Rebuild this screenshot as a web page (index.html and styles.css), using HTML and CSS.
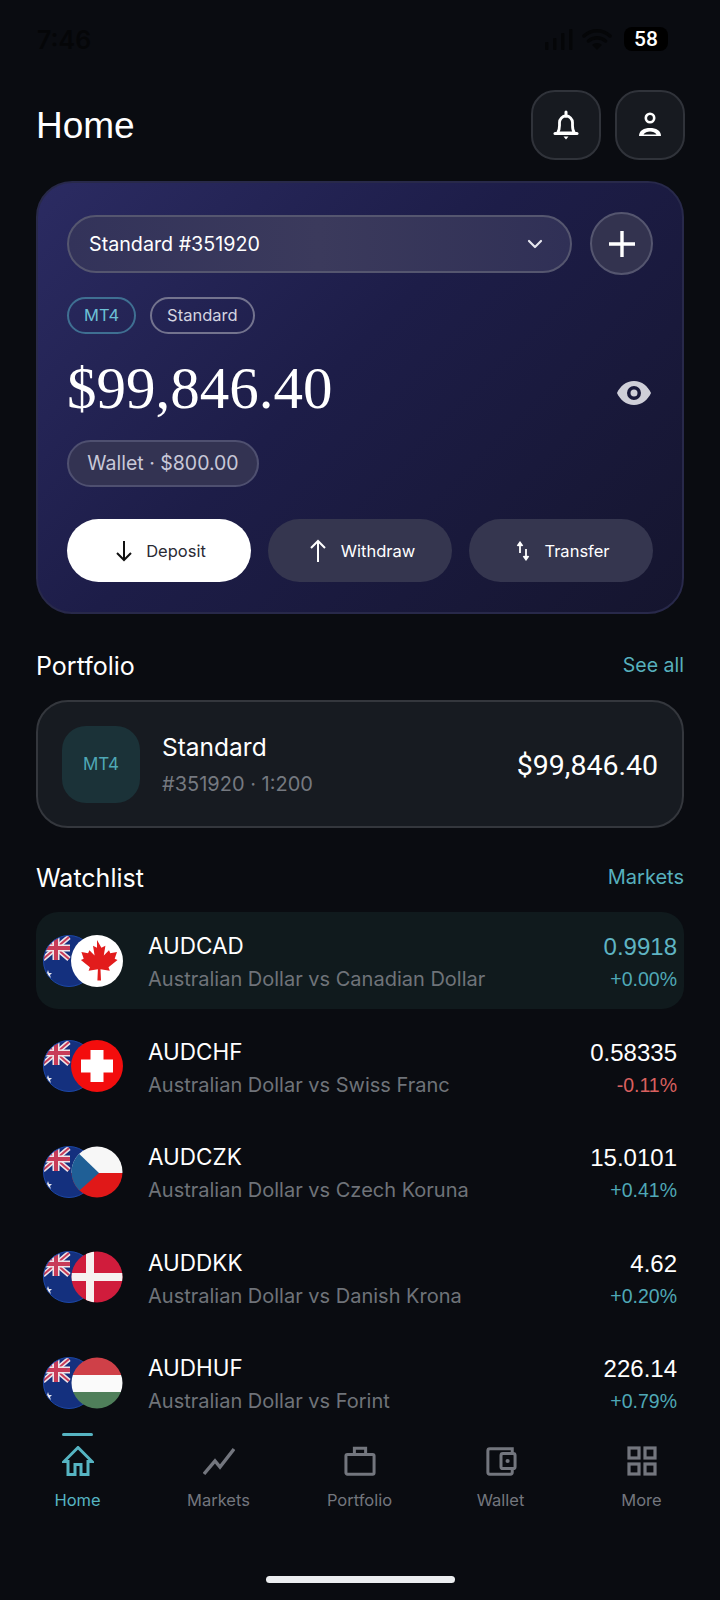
FILE: index.html
```html
<!DOCTYPE html>
<html lang="en">
<head>
<meta charset="utf-8">
<title>Home</title>
<link rel="stylesheet" href="styles.css">
</head>
<body>
<svg class="defs" width="0" height="0" aria-hidden="true">
  <defs>
    <clipPath id="round"><circle cx="26" cy="26" r="25.5"/></clipPath>
    <symbol id="flag-au" viewBox="0 0 52 52">
      <g clip-path="url(#round)">
        <rect width="52" height="52" fill="#14307e"/>
        <path d="M0 2L26 24M26 2L0 24" stroke="#efe4e8" stroke-width="5"/>
        <path d="M0 2L26 24M26 2L0 24" stroke="#c83c58" stroke-width="2"/>
        <path d="M13 0V25M0 13H27" stroke="#efe4e8" stroke-width="7"/>
        <path d="M13 0V25M0 13H27" stroke="#c83c58" stroke-width="4"/>
        <path d="M5 35l1 3 3 0-2 2 1 3-3-2-3 2 1-3-2-2 3 0z" fill="#e8e8f0"/>
      </g>
      <circle cx="26" cy="26" r="25.5" fill="none" stroke="#1c48a8" stroke-width="1"/>
    </symbol>
    <symbol id="flag-ca" viewBox="0 0 52 52">
      <circle cx="26" cy="26" r="26" fill="#fff"/>
      <path d="M26 5l4.400 7.800 4-2.100-1.600 9.900 5.200-5.400 1.300 3 6.700-1.200-2.300 6.800 2.800 1.100-9 7.400 1.300 3.500-9.300-1.500.5 11.200h-3.600l.5-11.200-9.300 1.500 1.300-3.500-9-7.400 2.800-1.100-2.300-6.800 6.700 1.200 1.300-3 5.200 5.400-1.600-9.900 4 2.100z" fill="#e21c1c"/>
    </symbol>
    <symbol id="flag-ch" viewBox="0 0 52 52">
      <circle cx="26" cy="26" r="26" fill="#f30d0d"/>
      <path d="M19.500 10h13v9.500H42v13h-9.500V42h-13v-9.500H10v-13h9.500z" fill="#fff"/>
    </symbol>
    <symbol id="flag-cz" viewBox="0 0 52 52">
      <g clip-path="url(#round)">
        <rect width="52" height="27" fill="#f7f7f7"/>
        <rect y="27" width="52" height="25" fill="#e01818"/>
        <path d="M0 0L28 27 0 52z" fill="#1f5f96"/>
      </g>
    </symbol>
    <symbol id="flag-dk" viewBox="0 0 52 52">
      <g clip-path="url(#round)">
        <rect width="52" height="52" fill="#d01c3c"/>
        <rect x="15" width="8" height="52" fill="#f6f0f0"/>
        <rect y="22" width="52" height="8" fill="#f6f0f0"/>
      </g>
    </symbol>
    <symbol id="flag-hu" viewBox="0 0 52 52">
      <g clip-path="url(#round)">
        <rect width="52" height="18" fill="#cf4048"/>
        <rect y="18" width="52" height="17" fill="#fafafa"/>
        <rect y="35" width="52" height="17" fill="#4f7f5a"/>
      </g>
    </symbol>
  </defs>
</svg>

<div class="status">
  <span class="clock">7:46</span>
  <div class="status-right">
    <svg width="30" height="22" viewBox="0 0 30 22"><g fill="#050608"><rect x="1" y="14" width="3.500" height="8" rx="1"/><rect x="9" y="10" width="3.500" height="12" rx="1"/><rect x="17" y="5" width="3.500" height="17" rx="1"/><rect x="25" y="1" width="3.500" height="21" rx="1"/></g></svg>
    <svg width="30" height="22" viewBox="0 0 30 22"><path d="M2 8a19 19 0 0 1 26 0M6.500 13a13 13 0 0 1 17 0" fill="none" stroke="#050608" stroke-width="3.500" stroke-linecap="round"/><path d="M15 22l-5-5a7 7 0 0 1 10 0z" fill="#050608"/></svg>
    <span class="battery">58</span>
  </div>
</div>

<header class="top">
  <h1 class="title">Home</h1>
  <div class="top-actions">
    <button class="square">
      <svg width="26" height="30" viewBox="0 0 26 30"><path d="M4.500 23c1.600-2 2-4 2-7.500v-3a6.500 6.500 0 0 1 13 0v3c0 3.500.4 5.500 2 7.500z" fill="none" stroke="#fff" stroke-width="2.800" stroke-linejoin="round"/><path d="M13 2v4" stroke="#fff" stroke-width="3" stroke-linecap="round"/><path d="M2 23.500h22" stroke="#fff" stroke-width="3" stroke-linecap="round"/><path d="M10.500 26.500h5L13 29.500z" fill="#fff"/></svg>
    </button>
    <button class="square">
      <svg width="26" height="26" viewBox="0 0 26 26"><circle cx="13" cy="6" r="4.200" fill="none" stroke="#fff" stroke-width="2.600"/><path d="M2 24c0-5.500 5-8 11-8s11 2.500 11 8z" fill="#fff"/><path d="M6.500 22.500c1-2 4-3 6.500-3s5.500 1 6.500 3z" fill="#171a20"/></svg>
    </button>
  </div>
</header>

<main class="scroll">
  <section class="card">
    <div class="account-row">
      <div class="select">
        <span>Standard #351920</span>
        <svg width="16" height="10" viewBox="0 0 16 10"><path d="M2 2l6 6 6-6" fill="none" stroke="#e6e6ee" stroke-width="2.200" stroke-linecap="round" stroke-linejoin="round"/></svg>
      </div>
      <button class="plus">
        <svg width="28" height="28" viewBox="0 0 28 28"><path d="M14 1v26M1 14h26" stroke="#fff" stroke-width="3.400"/></svg>
      </button>
    </div>
    <div class="chips">
      <span class="chip chip-teal">MT4</span>
      <span class="chip chip-plain">Standard</span>
    </div>
    <div class="balance-row">
      <span class="balance">$99,846.40</span>
      <svg class="eye" width="36" height="28" viewBox="0 0 36 28"><path fill-rule="evenodd" d="M18 2c8 0 14 5.500 17 12-3 6.500-9 12-17 12S4 20.500 1 14C4 7.500 10 2 18 2zm0 5a7 7 0 1 0 0 14 7 7 0 0 0 0-14zm0 3.500a3.500 3.500 0 1 1 0 7 3.500 3.500 0 0 1 0-7z" fill="#cfcfd8"/></svg>
    </div>
    <div class="wallet">Wallet · $800.00</div>
    <div class="actions">
      <button class="action action-light">
        <svg width="16" height="22" viewBox="0 0 16 22"><path d="M8 1v19M1 13l7 7 7-7" fill="none" stroke="#111" stroke-width="2"/></svg>
        <span>Deposit</span>
      </button>
      <button class="action">
        <svg width="18" height="25" viewBox="0 0 18 25"><path d="M9 24V3M2 10l7-7 7 7" fill="none" stroke="#fff" stroke-width="2"/></svg>
        <span>Withdraw</span>
      </button>
      <button class="action">
        <svg width="14" height="20" viewBox="0 0 14 20"><path d="M4 12V3M1.500 5L4 1.500 6.500 5M10 8v10M7.500 15l2.500 3.500 2.500-3.500" fill="#fff" stroke="#fff" stroke-width="1.800"/></svg>
        <span>Transfer</span>
      </button>
    </div>
  </section>

  <div class="section-head section-portfolio">
    <h2 class="section-title">Portfolio</h2>
    <a class="section-link link-all">See all</a>
  </div>
  <section class="portfolio">
    <div class="mt-badge">MT4</div>
    <div class="portfolio-info">
      <div class="portfolio-name">Standard</div>
      <div class="portfolio-sub">#351920 · 1:200</div>
    </div>
    <div class="portfolio-value">$99,846.40</div>
  </section>

  <div class="section-head section-watch">
    <h2 class="section-title">Watchlist</h2>
    <a class="section-link">Markets</a>
  </div>
  <section class="rows">
    <div class="row row-active">
      <div class="flags"><svg class="flag"><use href="#flag-au"/></svg><svg class="flag flag-top"><use href="#flag-ca"/></svg></div>
      <div class="pair"><div class="sym">AUDCAD</div><div class="desc">Australian Dollar vs Canadian Dollar</div></div>
      <div class="quote"><div class="price price-teal">0.9918</div><div class="chg up">+0.00%</div></div>
    </div>
    <div class="row">
      <div class="flags"><svg class="flag"><use href="#flag-au"/></svg><svg class="flag flag-top"><use href="#flag-ch"/></svg></div>
      <div class="pair"><div class="sym">AUDCHF</div><div class="desc">Australian Dollar vs Swiss Franc</div></div>
      <div class="quote"><div class="price">0.58335</div><div class="chg down">-0.11%</div></div>
    </div>
    <div class="row">
      <div class="flags"><svg class="flag"><use href="#flag-au"/></svg><svg class="flag flag-top"><use href="#flag-cz"/></svg></div>
      <div class="pair"><div class="sym">AUDCZK</div><div class="desc">Australian Dollar vs Czech Koruna</div></div>
      <div class="quote"><div class="price">15.0101</div><div class="chg up">+0.41%</div></div>
    </div>
    <div class="row">
      <div class="flags"><svg class="flag"><use href="#flag-au"/></svg><svg class="flag flag-top"><use href="#flag-dk"/></svg></div>
      <div class="pair"><div class="sym">AUDDKK</div><div class="desc">Australian Dollar vs Danish Krona</div></div>
      <div class="quote"><div class="price">4.62</div><div class="chg up">+0.20%</div></div>
    </div>
    <div class="row">
      <div class="flags"><svg class="flag"><use href="#flag-au"/></svg><svg class="flag flag-top"><use href="#flag-hu"/></svg></div>
      <div class="pair"><div class="sym">AUDHUF</div><div class="desc">Australian Dollar vs Forint</div></div>
      <div class="quote"><div class="price">226.14</div><div class="chg up">+0.79%</div></div>
    </div>
  </section>
</main>

<nav class="nav">
  <a class="nav-item nav-active">
    <svg width="32" height="30" viewBox="0 0 32 30"><path d="M16 1.500L2 15.500h4v13h7v-10h6v10h7v-13h4z" fill="none" stroke="#56b4c2" stroke-width="3" stroke-linejoin="miter"/></svg>
    <span>Home</span>
  </a>
  <a class="nav-item">
    <svg width="32" height="30" viewBox="0 0 32 30"><path d="M1 28l11-13 5 6L31 3" fill="none" stroke="#73767e" stroke-width="3.400"/></svg>
    <span>Markets</span>
  </a>
  <a class="nav-item">
    <svg width="32" height="30" viewBox="0 0 34 32"><rect x="2" y="9" width="30" height="21" rx="1.500" fill="none" stroke="#73767e" stroke-width="3.200"/><path d="M11 9V2.500h12V9" fill="none" stroke="#73767e" stroke-width="3.200"/></svg>
    <span>Portfolio</span>
  </a>
  <a class="nav-item">
    <svg width="32" height="30" viewBox="0 0 34 32"><path d="M29 8V3H5a2 2 0 0 0-2 2v23a2 2 0 0 0 2 2h22a2 2 0 0 0 2-2v-4" fill="none" stroke="#73767e" stroke-width="3.200"/><rect x="17" y="8" width="15" height="16" rx="2" fill="none" stroke="#73767e" stroke-width="3.200"/><circle cx="24" cy="16" r="2.200" fill="#73767e"/></svg>
    <span>Wallet</span>
  </a>
  <a class="nav-item">
    <svg width="30" height="30" viewBox="0 0 30 30"><g fill="none" stroke="#73767e" stroke-width="3.200"><rect x="2" y="2" width="10" height="10"/><rect x="18" y="2" width="10" height="10"/><rect x="2" y="18" width="10" height="10"/><rect x="18" y="18" width="10" height="10"/></g></svg>
    <span>More</span>
  </a>
</nav>
<div class="home-wrap"><div class="home-bar"></div></div>
</body>
</html>
```
FILE: styles.css
```css
* { box-sizing: border-box; }
html, body { margin: 0; padding: 0; }
body {
  width: 720px;
  height: 1600px;
  overflow: hidden;
  background: #0a0c11;
  color: #fff;
  font-family: "Inter", "Liberation Sans", sans-serif;
  display: flex;
  flex-direction: column;
}
button { font: inherit; color: inherit; border: 0; padding: 0; background: none; }
.defs { position: absolute; }

.status {
  height: 90px;
  flex: none;
  display: flex;
  justify-content: space-between;
  align-items: flex-start;
  padding: 26px 52px 0 37px;
}
.clock { font-size: 25px; font-weight: 600; color: #050608; line-height: 28px; }
.status-right { display: flex; align-items: center; gap: 8px; height: 26px; }
.battery {
  width: 44px;
  height: 24px;
  margin-left: 4px;
  border-radius: 8px;
  background: #000;
  font-family: "Roboto", sans-serif;
  font-size: 21px;
  font-weight: 500;
  line-height: 24px;
  text-align: center;
}

.top {
  height: 70px;
  flex: none;
  padding: 2px 35px 0 36px;
  display: flex;
  align-items: center;
  justify-content: space-between;
}
.title {
  margin: 0;
  font-family: "Liberation Sans", sans-serif;
  font-size: 37px;
  font-weight: 400;
}
.top-actions { display: flex; gap: 14px; margin-top: -2px; }
.square {
  width: 70px;
  height: 70px;
  border-radius: 24px;
  background: #171a20;
  border: 2px solid #30333a;
  display: flex;
  align-items: center;
  justify-content: center;
}

.scroll { height: 1265px; flex: none; overflow: hidden; padding: 21px 36px 0; }

.card {
  height: 433px;
  border-radius: 36px;
  border: 2px solid #28294a;
  padding: 29px 29px 0;
  background: linear-gradient(135deg, #2b2b62 0%, #1d1d48 45%, #15152e 100%);
}
.account-row { display: flex; align-items: center; justify-content: space-between; }
.select {
  width: 505px;
  height: 58px;
  border-radius: 29px;
  border: 2px solid #55566f;
  background: linear-gradient(90deg, #33335a, #3b3a5c 50%, #303056);
  display: flex;
  align-items: center;
  justify-content: space-between;
  padding: 0 27px 0 20px;
  font-size: 19.700px;
}
.plus {
  width: 63px;
  height: 63px;
  border-radius: 50%;
  border: 2px solid #55566f;
  background: #33334f;
  display: flex;
  align-items: center;
  justify-content: center;
}
.chips { display: flex; gap: 14px; margin-top: 22px; }
.chip {
  height: 37px;
  border-radius: 19px;
  font-size: 16.500px;
  line-height: 33px;
  border: 2px solid;
  padding: 0 15px;
}
.chip-teal { color: #6cc0d6; border-color: #3f6f92; }
.chip-plain { color: #d4d4e0; border-color: #73738e; }
.balance-row {
  height: 106px;
  padding-top: 2px;
  display: flex;
  align-items: center;
  justify-content: space-between;
  padding-right: 1px;
}
.balance { font-family: "Liberation Serif", serif; font-size: 59px; line-height: 1; }
.eye { margin-top: 10px; }
.wallet {
  width: 192px;
  height: 47px;
  border-radius: 24px;
  border: 2px solid #4f5070;
  background: #333352;
  color: #c8c8d8;
  font-size: 19.500px;
  line-height: 43px;
  text-align: center;
}
.actions { display: flex; gap: 17px; margin-top: 32px; }
.action {
  flex: 1;
  height: 63px;
  border-radius: 32px;
  background: #35364f;
  display: flex;
  align-items: center;
  justify-content: center;
  gap: 14px;
  padding-left: 4px;
  font-size: 16.500px;
}
.action-light { background: #fff; color: #2a2a34; }

.section-head {
  height: 36px;
  display: flex;
  align-items: center;
  justify-content: space-between;
}
.section-portfolio { margin-top: 33px; }
.section-watch { margin-top: 31px; }
.section-title { margin: 2px 0 0; font-size: 25px; font-weight: 400; }
.section-link { font-size: 20px; color: #57b0bd; }
.link-all { font-size: 19.500px; }

.portfolio {
  margin-top: 17px;
  height: 128px;
  border-radius: 32px;
  background: #171b21;
  border: 2px solid #34373d;
  display: flex;
  align-items: center;
  padding: 0 24px;
}
.mt-badge {
  width: 78px;
  height: 77px;
  border-radius: 24px;
  background: #1b3238;
  color: #4fa8b6;
  font-size: 17px;
  line-height: 77px;
  text-align: center;
}
.portfolio-info { flex: 1; margin-left: 22px; padding-top: 1px; }
.portfolio-name { font-size: 24.500px; line-height: 30px; }
.portfolio-sub { font-size: 20px; line-height: 26px; margin-top: 9px; color: #757980; }
.portfolio-value { font-size: 28.500px; font-family: "Roboto", sans-serif; padding-top: 2px; }

.rows { margin-top: 17px; display: flex; flex-direction: column; gap: 8.500px; }
.row {
  flex: none;
  height: 97px;
  border-radius: 22px;
  padding: 0 7px;
  display: flex;
  align-items: center;
}
.row-active { background: #101a1d; }
.flags { width: 80px; height: 52px; position: relative; flex: none; }
.flag { width: 52px; height: 52px; display: block; }
.flag-top { position: absolute; left: 28px; top: 0; }
.pair { flex: 1; margin-left: 25px; padding-top: 2px; }
.sym { font-size: 22.500px; line-height: 30px; }
.desc { font-size: 20px; line-height: 26px; margin-top: 5px; color: #6f7379; }
.quote { text-align: right; font-family: "Liberation Sans", sans-serif; padding-top: 3px; }
.price { font-size: 24px; line-height: 30px; }
.price-teal { color: #5fb4c3; }
.chg { font-size: 19.500px; line-height: 26px; margin-top: 4px; }
.up { color: #4fa8b6; }
.down { color: #d9605f; }

.nav {
  height: 150px;
  flex: none;
  display: flex;
  padding: 0 8px 0 7px;
  position: relative;
}
.nav-item {
  flex: 1;
  position: relative;
  display: flex;
  flex-direction: column;
  align-items: center;
  padding-top: 21px;
  gap: 12px;
  color: #73767e;
  font-size: 16.500px;
}
.nav-item svg { flex: none; }
.nav-item span { line-height: 24px; }
.nav-active { color: #56b4c2; }
.nav-active::before {
  content: "";
  position: absolute;
  top: 8px;
  left: 55px;
  width: 31px;
  height: 3px;
  background: #56b4c2;
  border-radius: 2px;
}
.home-wrap { flex: 1; display: flex; justify-content: center; }
.home-bar { width: 189px; height: 7px; border-radius: 4px; background: #eceef0; margin-top: 1px; }
```
